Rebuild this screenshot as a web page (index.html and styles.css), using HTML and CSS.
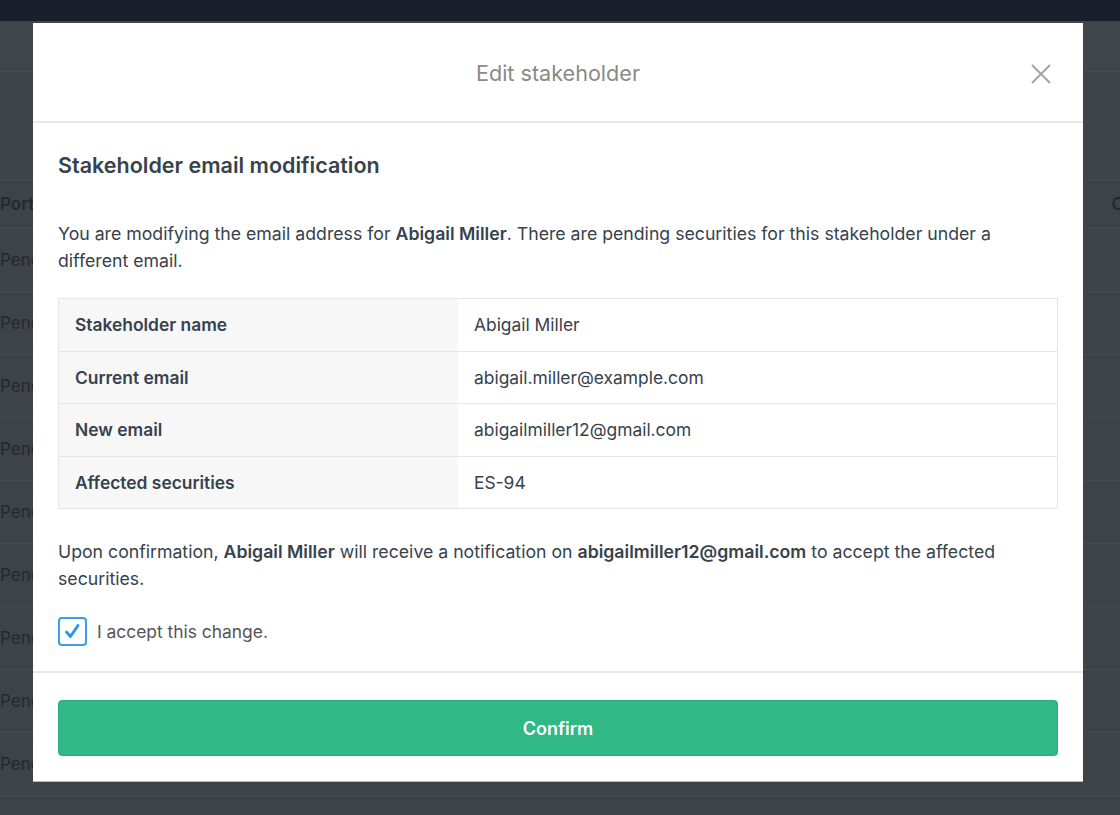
FILE: index.html
```html
<!DOCTYPE html>
<html>
<head>
<meta charset="utf-8">
<link rel="stylesheet" href="styles.css">
</head>
<body>
<div class="page">
  <div class="navbar"></div>
  <div class="bg-band bg-band-1"></div>
  <div class="bg-band bg-band-2"></div>
  <div class="bg-head">
    <span class="bg-cell">Portfolio</span>
    <span class="bg-cell bg-right">C</span>
  </div>
  <div class="bg-row"><span class="bg-cell">Pending</span></div>
  <div class="bg-row"><span class="bg-cell">Pending</span></div>
  <div class="bg-row"><span class="bg-cell">Pending</span></div>
  <div class="bg-row"><span class="bg-cell">Pending</span></div>
  <div class="bg-row"><span class="bg-cell">Pending</span></div>
  <div class="bg-row"><span class="bg-cell">Pending</span></div>
  <div class="bg-row"><span class="bg-cell">Pending</span></div>
  <div class="bg-row"><span class="bg-cell">Pending</span></div>
  <div class="bg-row"><span class="bg-cell">Pending</span></div>
</div>

<div class="modal">
  <div class="modal-header">
    <h2 class="modal-title">Edit stakeholder</h2>
    <button class="close" aria-label="Close">
      <svg width="22" height="22" viewBox="0 0 22 22"><path d="M2 2 L20 20 M20 2 L2 20" stroke="#a3a3a3" stroke-width="2" fill="none"/></svg>
    </button>
  </div>
  <div class="modal-body">
    <h3 class="section-title">Stakeholder email modification</h3>
    <p class="text">You are modifying the email address for <strong>Abigail Miller</strong>. There are pending securities for this stakeholder under a different email.</p>
    <table class="info">
      <tr><th>Stakeholder name</th><td>Abigail Miller</td></tr>
      <tr><th>Current email</th><td>abigail.miller@example.com</td></tr>
      <tr><th>New email</th><td>abigailmiller12@gmail.com</td></tr>
      <tr><th>Affected securities</th><td>ES-94</td></tr>
    </table>
    <p class="text text-2">Upon confirmation, <strong>Abigail Miller</strong> will receive a notification on <strong>abigailmiller12@gmail.com</strong> to accept the affected securities.</p>
    <label class="check">
      <span class="box"><svg width="19" height="19" viewBox="0 0 19 19"><path d="M3.5 10 L7.5 14.5 L15 3.5" stroke="#2196f0" stroke-width="2.8" fill="none" stroke-linecap="round" stroke-linejoin="round"/></svg></span>
      <span class="check-label">I accept this change.</span>
    </label>
  </div>
  <div class="modal-footer">
    <button class="confirm">Confirm</button>
  </div>
</div>
</body>
</html>
```
FILE: styles.css
```css
html, body {
  margin: 0;
  padding: 0;
}
body {
  width: 1120px;
  height: 815px;
  overflow: hidden;
  background: #3e4348;
  font-family: Inter, "Liberation Sans", sans-serif;
  position: relative;
}
.page {
  display: flex;
  flex-direction: column;
}
.navbar {
  height: 21px;
  background: #19202b;
}
.bg-band-1 {
  height: 50px;
  border-bottom: 1px solid #474c51;
  background: #40454a;
}
.bg-band-2 {
  height: 107px;
  border-bottom: 1px solid #474c51;
}
.bg-head, .bg-row {
  display: flex;
  align-items: center;
  justify-content: space-between;
  border-bottom: 1px solid #474c51;
  color: #25292d;
  font-size: 17px;
}
.bg-head {
  height: 48px;
  font-weight: 600;
}
.bg-row {
  height: 62px;
}
.bg-right {
  margin-right: -4px;
}
.modal {
  position: absolute;
  left: 33px;
  top: 23px;
  width: 1050px;
  height: 758px;
  background: #fff;
  box-shadow: 0 1px 0 #b8babc;
  display: flex;
  flex-direction: column;
  color: #36424d;
}
.modal-header {
  flex-shrink: 0;
  height: 98px;
  border-bottom: 2px solid #e8e8e8;
  display: flex;
  align-items: center;
  justify-content: center;
  position: relative;
}
.modal-title {
  margin: 2px 0 0;
  font-size: 21.6px;
  font-weight: 400;
  color: #8a8a8a;
}
.close {
  position: absolute;
  right: 31px;
  top: 40px;
  background: none;
  border: 0;
  padding: 0;
  width: 22px;
  height: 22px;
}
.close svg { display: block; }
.modal-body {
  flex-shrink: 0;
  padding: 29px 25px 25px;
  border-bottom: 2px solid #e8e8e8;
}
.section-title {
  margin: 0;
  font-size: 21.5px;
  line-height: 27px;
  font-weight: 600;
  color: #36424d;
}
.text {
  margin: 41px 0 0;
  font-size: 17.7px;
  line-height: 27px;
}
.text strong { font-weight: 600; }
.info {
  margin-top: 24px;
  width: 100%;
  border-collapse: collapse;
  font-size: 17.4px;
}
.info th, .info td {
  border: 1px solid #e6e6e6;
  height: 51.5px;
  padding: 0 16px;
  text-align: left;
}
.info th {
  width: 367px;
  background: #f7f7f7;
  font-weight: 600;
  border-right: 0;
}
.info td {
  border-left: 0;
}
.text-2 {
  margin-top: 29px;
}
.check {
  margin-top: 25px;
  display: flex;
  align-items: center;
  gap: 10px;
}
.box {
  width: 25px;
  height: 25px;
  border: 2px solid #3a9ee8;
  border-radius: 4px;
  display: flex;
  align-items: center;
  justify-content: center;
}
.check-label {
  font-size: 17.4px;
  color: #555;
}
.modal-footer {
  flex: 1;
  padding: 27px 25px 0;
}
.confirm {
  width: 100%;
  height: 56px;
  background: #30b886;
  border: 1px solid #2aab7b;
  border-radius: 4px;
  color: #fff;
  font-family: Inter, "Liberation Sans", sans-serif;
  font-size: 18px;
  font-weight: 600;
}
```
